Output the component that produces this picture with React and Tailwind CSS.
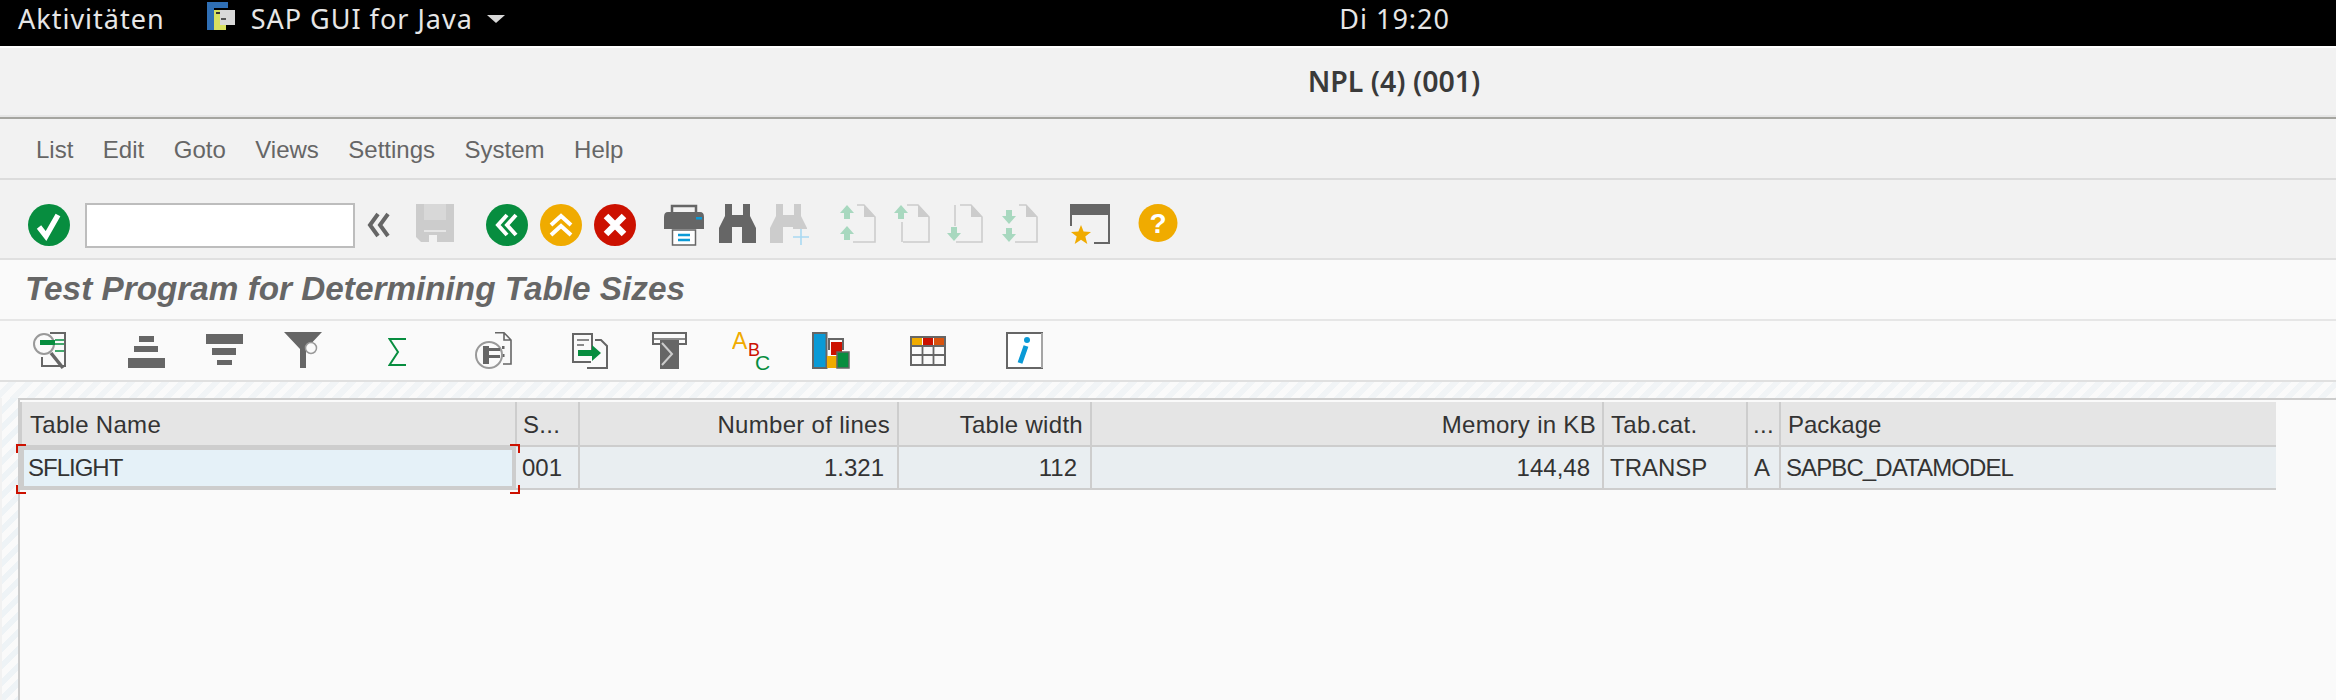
import React from 'react';

const G = '#666666';
const L = '#cccccc';
const GREEN = '#078d3f';
const ORANGE = '#f0ab00';
const RED = '#cc1100';
const BLUE = '#0a9ad6';
const MINT = '#a8d8bf';

function Svg({ w, h = 42, className = '', children }) {
  return (
    <svg width={w} height={h} viewBox={`0 0 ${w} ${h}`} fill="none" className={`shrink-0 ${className}`}>
      {children}
    </svg>
  );
}

function Round({ color, className, children }) {
  return (
    <Svg w={42} className={className}>
      <ellipse cx="21" cy="21" rx="21" ry="21" fill={color} />
      {children}
    </Svg>
  );
}

// small fat arrow used on the page icons
function Arrow({ x, y, down }) {
  const d = down
    ? `M${x - 3} ${y} h6 v6 h4 l-7 8 l-7 -8 h4 z`
    : `M${x} ${y} l7 8 h-4 v6 h-6 v-6 h-4 z`;
  return <path d={d} fill={MINT} />;
}

function Page({ className, left, children, x = 12 }) {
  return (
    <Svg w={37} className={className}>
      <path d={`M${x + 3} 1 H24 L35 13 V38 H${x - 1}`} stroke={L} strokeWidth="1.6" />
      <path d="M24 1 L35 13 H24 z" fill={L} />
      {left && <path d={left} stroke={L} strokeWidth="1.6" />}
      {children}
    </Svg>
  );
}

function Binocular({ color, className, plus }) {
  return (
    <Svg w={40} className={className}>
      <path
        d="M6 0 H13 V11 H24 V0 H31 V12 L37 24 V39 H23 V23 H13 V39 H0 V24 L6 12 z"
        fill={color}
      />
      {plus && (
        <>
          <rect x="22" y="25" width="18" height="17" fill="#f2f2f2" />
          <path d="M23 33 H39 M31 25 V41" stroke="#a9d9f2" strokeWidth="1.6" />
        </>
      )}
    </Svg>
  );
}

function MainToolbar() {
  return (
    <div className="h-[78px] pl-[28px] pt-[12px] flex items-center bg-[#f2f2f2]">
      <Round color={GREEN}>
        <path d="M11 23 L18 32 L30 11" stroke="#fff" strokeWidth="5.5" />
      </Round>
      <div className="ml-[15px] w-[270px] h-[45px] shrink-0 bg-white border-2 border-[#bdbdbd]" />
      <Svg w={24} className="ml-[11px]">
        <path d="M12 10 L4 21 L12 32 M22 10 L14 21 L22 32" stroke={G} strokeWidth="4" />
      </Svg>
      <Svg w={38} className="ml-[26px]">
        <path d="M0 0 H38 V38 H5 L0 33 z" fill={L} />
        <rect x="8" y="0" width="22" height="16" fill="#d8d8d8" />
        <rect x="8" y="26" width="22" height="2" fill="#e6e6e6" />
        <rect x="13" y="31" width="8" height="7" fill="#f2f2f2" />
      </Svg>
      <Round color={GREEN} className="ml-[32px]">
        <path d="M21 11 L12 21 L21 31 M30 11 L21 21 L30 31" stroke="#fff" strokeWidth="4" />
      </Round>
      <Round color={ORANGE} className="ml-[12px]">
        <path d="M11 21 L21 12 L31 21 M11 31 L21 22 L31 31" stroke="#fff" strokeWidth="4" />
      </Round>
      <Round color={RED} className="ml-[12px]">
        <path d="M12 12 L30 30 M30 12 L12 30" stroke="#fff" strokeWidth="6.5" />
      </Round>
      <Svg w={40} className="ml-[28px]">
        <path d="M8 8 V2 H32 V8" stroke={G} strokeWidth="2.5" />
        <path d="M0 13 Q0 8 4 8 H36 Q40 8 40 13 V25 H0 z" fill={G} />
        <rect x="32" y="13" width="6" height="2.5" fill={BLUE} />
        <path d="M8.5 26 H31.5 V41 H8.5 z" fill="#fff" stroke={G} strokeWidth="1.5" />
        <path d="M14 31 H26 M14 36 H26" stroke={BLUE} strokeWidth="2.5" />
      </Svg>
      <Binocular color={G} className="ml-[15px]" />
      <Binocular color={L} className="ml-[11px]" plus />
      <Page className="ml-[30px]" x={14}>
        <Arrow x={7} y={1} />
        <Arrow x={7} y={22} />
      </Page>
      <Page className="ml-[17px]" x={10} left="M8 18 V38">
        <Arrow x={7} y={1} />
      </Page>
      <Page className="ml-[16px]" x={10} left="M8 1 V22">
        <Arrow x={7} y={23} down />
      </Page>
      <Page className="ml-[18px]" x={14}>
        <Arrow x={7} y={6} down />
        <Arrow x={7} y={24} down />
      </Page>
      <Svg w={40} className="ml-[31px]">
        <rect x="0" y="0" width="40" height="11" fill={G} />
        <path d="M1 11 V22 M39 11 V39 H24" stroke={G} strokeWidth="2" />
        <path d="M11 21 L13.6 27.6 L21 28 L15.3 32.4 L17.3 40 L11 35.8 L4.7 40 L6.7 32.4 L1 28 L8.4 27.6 z" fill={ORANGE} />
      </Svg>
      <Svg w={40} className="ml-[28px]">
        <ellipse cx="20" cy="19" rx="19.5" ry="19" fill={ORANGE} />
        <text x="20" y="29" textAnchor="middle" fontSize="28" fontWeight="700" fill="#fff" fontFamily="'Liberation Sans', sans-serif">?</text>
      </Svg>
    </div>
  );
}

function AppToolbar() {
  return (
    <div className="h-[59px] pl-[33px] flex items-center bg-[#fafafa]">
      <Svg w={33} h={38}>
        <path d="M9 25 V34 H32 V1 H17" stroke={G} strokeWidth="2" />
        <circle cx="11" cy="12" r="10" fill="#fafafa" stroke="#999999" strokeWidth="2" />
        <rect x="7" y="8" width="15" height="5" fill={GREEN} />
        <path d="M22 8 H31 M22 12 H31 M22 19 H31" stroke={GREEN} strokeWidth="1.6" />
        <path d="M18 21 L30 36" stroke={G} strokeWidth="3.5" />
      </Svg>
      <Svg w={37} h={38} className="ml-[62px]">
        <rect x="11" y="4" width="15" height="6" fill={G} />
        <rect x="6" y="14" width="24" height="6" fill={G} />
        <rect x="0" y="26" width="37" height="10" fill={G} />
      </Svg>
      <Svg w={37} h={38} className="ml-[41px]">
        <rect x="0" y="2" width="37" height="10" fill={G} />
        <rect x="6" y="16" width="24" height="7" fill={G} />
        <rect x="11" y="28" width="15" height="5" fill={G} />
      </Svg>
      <Svg w={38} h={38} className="ml-[41px]">
        <path d="M0 0 H38 L22 17 V36 H16 V17 z" fill={G} />
        <circle cx="27" cy="16" r="5.5" fill="#fafafa" stroke="#999999" strokeWidth="1.5" />
      </Svg>
      <Svg w={18} h={38} className="ml-[66px]">
        <path d="M18 7 H1.5 L10 20 L1.5 33 H18" stroke={GREEN} strokeWidth="2" />
      </Svg>
      <Svg w={37} h={38} className="ml-[69px]">
        <path d="M20 0.8 H29 L36 8 V32 H28 M29 1 V8 H36" stroke={G} strokeWidth="1.6" />
        <rect x="27" y="14" width="2.5" height="3" fill={G} />
        <rect x="27" y="22" width="2.5" height="3" fill={G} />
        <circle cx="14" cy="23" r="13" fill="#fafafa" stroke="#999999" strokeWidth="2" />
        <rect x="8" y="14" width="6" height="18" fill={G} />
        <rect x="14" y="16" width="11" height="3" fill={G} />
        <rect x="14" y="23" width="11" height="3" fill={G} />
      </Svg>
      <Svg w={36} h={38} className="ml-[60px]">
        <path d="M19 30 H1 V2 H20 V18" stroke={G} strokeWidth="2" />
        <path d="M5 8 H17 M5 13 H12" stroke={G} strokeWidth="1.6" />
        <path d="M23 8 H29 L35 14 V36 H15" stroke={G} strokeWidth="2" />
        <path d="M6 18 H20 V13 L29 21 L20 29 V24 H6 z" fill={GREEN} />
      </Svg>
      <Svg w={35} h={38} className="ml-[44px]">
        <rect x="1" y="1" width="33" height="11" stroke={G} strokeWidth="2" />
        <rect x="8" y="8" width="19" height="29" fill={G} />
        <path d="M1 7 H34" stroke={G} strokeWidth="1.5" />
        <path d="M10 11 L20 22 L10 33" stroke="#cccccc" strokeWidth="2" />
      </Svg>
      <Svg w={38} h={46} className="ml-[45px] -mr-[2px]">
        <text x="0" y="21" fontSize="23" fill={ORANGE} fontFamily="'Liberation Sans', sans-serif">A</text>
        <text x="16" y="28" fontSize="18" fill={RED} fontFamily="'Liberation Sans', sans-serif">B</text>
        <text x="23" y="42" fontSize="21" fill={GREEN} fontFamily="'Liberation Sans', sans-serif">C</text>
      </Svg>
      <Svg w={38} h={38} className="ml-[44px]">
        <rect x="1" y="1" width="13.5" height="35" fill={BLUE} stroke={G} strokeWidth="2" />
        <path d="M17 18 V7 H31 V18" stroke={G} strokeWidth="2" />
        <rect x="19" y="10" width="11" height="13" fill={RED} />
        <rect x="15" y="24" width="11" height="12" fill={ORANGE} />
        <rect x="25" y="20" width="12" height="16" fill={GREEN} stroke={G} strokeWidth="1.5" />
      </Svg>
      <Svg w={36} h={38} className="ml-[60px]">
        <rect x="1" y="5" width="34" height="28" fill="#fafafa" stroke={G} strokeWidth="2" />
        <rect x="2" y="6" width="10" height="7" fill={ORANGE} />
        <rect x="13" y="6" width="10" height="7" fill={RED} />
        <rect x="24" y="6" width="10" height="7" fill="#d9530e" />
        <path d="M1 14 H35 M1 23 H35 M12.5 14 V33 M23.5 14 V33" stroke={G} strokeWidth="1.8" />
      </Svg>
      <Svg w={37} h={38} className="ml-[60px]">
        <rect x="1" y="1" width="35" height="35" fill="#fff" stroke={G} strokeWidth="2" />
        <path d="M36 1 V36" stroke="#a5a5a5" strokeWidth="2" />
        <circle cx="21" cy="8" r="3" fill={BLUE} />
        <path d="M20 14 L14 31" stroke={BLUE} strokeWidth="5" />
      </Svg>
    </div>
  );
}

function Corner({ className }) {
  return <span className={`absolute w-[10px] h-[9px] border-[#cc1100] ${className}`} />;
}

function ResultTable() {
  return (
    <div className="mt-[2px] w-[2256px] text-[24px] leading-none text-[#333333] whitespace-nowrap">
      <div className="h-[45px] flex items-stretch bg-[#e5e5e5] border-b-2 border-[#cdcdcd] tracking-[0.3px]">
        <div className="w-[497px] pl-[8px] pt-[2px] flex items-center border-l-2 border-r-2 border-[#cdcdcd]">Table Name</div>
        <div className="w-[63px] pl-[6px] pt-[2px] flex items-center border-r-2 border-[#cdcdcd]">S...</div>
        <div className="w-[319px] pr-[7px] pt-[2px] flex items-center justify-end border-r-2 border-[#cdcdcd]">Number of lines</div>
        <div className="w-[193px] pr-[7px] pt-[2px] flex items-center justify-end border-r-2 border-[#cdcdcd]">Table width</div>
        <div className="w-[512px] pr-[6px] pt-[2px] flex items-center justify-end border-r-2 border-[#cdcdcd]">Memory in KB</div>
        <div className="w-[144px] pl-[7px] pt-[2px] flex items-center border-r-2 border-[#cdcdcd]">Tab.cat.</div>
        <div className="w-[33px] pl-[5px] pt-[2px] flex items-center border-r-2 border-[#cdcdcd]">...</div>
        <div className="w-[495px] pl-[7px] pt-[2px] flex items-center tracking-normal">Package</div>
      </div>
      <div className="h-[43px] flex items-stretch bg-[#e9eef1] border-b-2 border-[#cdcdcd]">
        <div className="relative w-[496px] h-[44px] -mt-[1px] mr-[1px] pl-[4px] flex items-center bg-[#e5f1f8] border-4 border-[#cdcdcd] tracking-[-1px]">
          SFLIGHT
          <Corner className="-left-[8px] -top-[6px] border-t-2 border-l-2" />
          <Corner className="-right-[8px] -top-[6px] border-t-2 border-r-2" />
          <Corner className="-left-[8px] -bottom-[8px] border-b-2 border-l-2" />
          <Corner className="-right-[8px] -bottom-[8px] border-b-2 border-r-2" />
        </div>
        <div className="w-[63px] pl-[5px] flex items-center border-r-2 border-[#cdcdcd]">001</div>
        <div className="w-[319px] pr-[13px] flex items-center justify-end border-r-2 border-[#cdcdcd]">1.321</div>
        <div className="w-[193px] pr-[13px] flex items-center justify-end border-r-2 border-[#cdcdcd]">112</div>
        <div className="w-[512px] pr-[12px] flex items-center justify-end border-r-2 border-[#cdcdcd]">144,48</div>
        <div className="w-[144px] pl-[6px] flex items-center border-r-2 border-[#cdcdcd]">TRANSP</div>
        <div className="w-[33px] pl-[6px] flex items-center border-r-2 border-[#cdcdcd]">A</div>
        <div className="w-[495px] pl-[5px] flex items-center tracking-[-0.9px]">SAPBC_DATAMODEL</div>
      </div>
    </div>
  );
}

export default function App() {
  return (
    <div className="w-[2336px] h-[700px] overflow-hidden flex flex-col bg-[#fafafa] font-['Liberation_Sans',Arial,sans-serif]">
      <div className="h-[46px] pb-[9px] shrink-0 flex items-center bg-black text-[#e6e6e6] text-[27px] leading-none tracking-[1px] font-['Noto_Sans',sans-serif]">
        <span className="ml-[18px]">Aktivitäten</span>
        <svg width="28" height="28" viewBox="0 0 28 28" className="ml-[42px] -mt-[5px] shrink-0">
          <path d="M0 0 H21 V6 H7 V28 H0 z" fill="#2f6fb5" />
          <rect x="7" y="8" width="12" height="20" fill="#d8e060" />
          <rect x="13" y="8" width="15" height="15" fill="#d9d9d9" />
          <rect x="9" y="10" width="4" height="2" fill="#333333" />
          <rect x="14" y="16" width="5" height="2" fill="#555555" />
        </svg>
        <span className="ml-[16px]">SAP GUI for Java</span>
        <span className="ml-[14px] w-0 h-0 border-x-[9px] border-x-transparent border-t-[8px] border-t-[#d8d8d8]" />
        <span className="ml-auto mr-[886px]">Di 19:20</span>
      </div>
      <div className="h-[2px] shrink-0 bg-white" />
      <div className="h-[67px] shrink-0 pl-[452px] flex items-center justify-center bg-[#f2f2f2] text-[28.5px] font-semibold text-[#3a3a3a] font-['Noto_Sans',sans-serif]">
        NPL (4) (001)
      </div>
      <div className="h-[4px] shrink-0 bg-[#e6e6e6] border-b-2 border-[#a5a5a0]" />
      <div className="h-[59px] shrink-0 pl-[36px] pt-[2px] flex items-center gap-[29.5px] bg-[#f2f2f2] text-[24px] text-[#666666]">
        <span>List</span>
        <span>Edit</span>
        <span>Goto</span>
        <span>Views</span>
        <span>Settings</span>
        <span>System</span>
        <span>Help</span>
      </div>
      <div className="h-[2px] shrink-0 bg-[#dcdcdc]" />
      <MainToolbar />
      <div className="h-[2px] shrink-0 bg-[#e0e0e0]" />
      <div className="h-[59px] shrink-0 pl-[25px] pb-[1px] flex items-center bg-[#fafafa] text-[33.3px] font-bold italic text-[#666666]">
        Test Program for Determining Table Sizes
      </div>
      <div className="h-[2px] shrink-0 bg-[#e6e6e6]" />
      <AppToolbar />
      <div className="h-[2px] shrink-0 bg-[#e0e0e0]" />
      <div className="h-[16px] shrink-0 bg-[repeating-linear-gradient(135deg,#fafafa_0,#fafafa_6px,#f1f4f6_6px,#f1f4f6_12px)]" />
      <div className="flex-1 flex min-h-0">
        <div className="w-[18px] shrink-0 border-l-2 border-[#f2f2f2] bg-[repeating-linear-gradient(135deg,#fafafa_0,#fafafa_6px,#eef3f6_6px,#eef3f6_12px)]" />
        <div className="flex-1 border-l-2 border-t-2 border-[#cdcdcd] bg-[#fafafa]">
          <ResultTable />
        </div>
      </div>
    </div>
  );
}
